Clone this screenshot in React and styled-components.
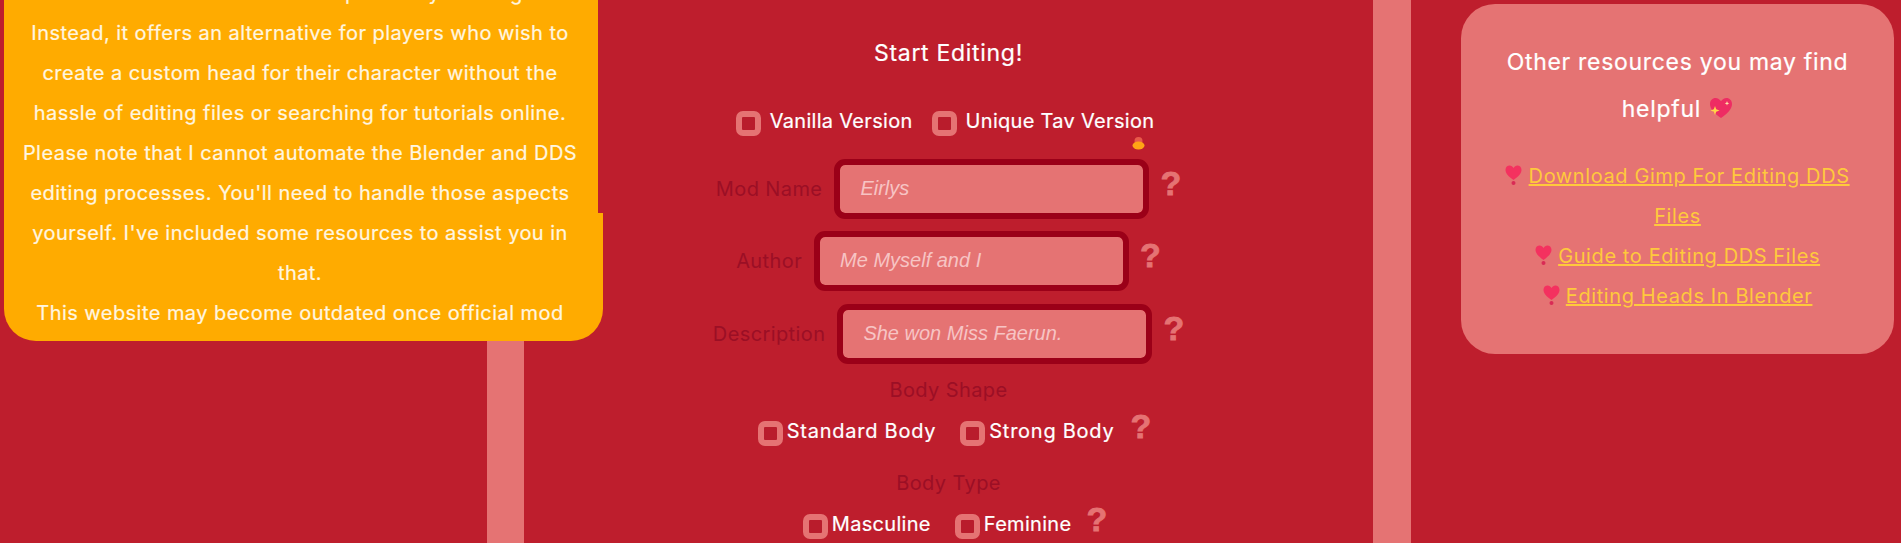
import styled, { createGlobalStyle } from 'styled-components';

const Global = createGlobalStyle`
html, body { margin:0; padding:0; background:#be1e2d; }
body { font-family:"Inter","Liberation Sans",sans-serif; overflow:hidden; }
`;

const Page = styled.div`
position:relative;
display:flex;
align-items:flex-start;
width:1901px;
height:543px;
overflow:hidden;
background:#be1e2d;
`;

const Intro = styled.section`
position:absolute;
left:4px;
bottom:202px;
color:#fff6e0;
font-size:20px;
letter-spacing:.45px;
line-height:40px;
text-align:center;
-webkit-text-stroke:.2px #fff6e0;
`;

const IntroTop = styled.div`
width:594px;
background:#ffab00;
`;

const IntroBottom = styled.div`
width:599px;
padding-bottom:8px;
background:#ffab00;
border-radius:0 0 32px 32px;
`;

const IntroLine = styled.div`
width:592px;
white-space:nowrap;
`;

const Editor = styled.main`
box-sizing:border-box;
flex:none;
width:924px;
height:543px;
margin-left:487px;
border-left:37px solid #e57373;
border-right:38px solid #e57373;
display:flex;
flex-direction:column;
align-items:center;
`;

const Heading = styled.h2`
margin:36px 0 0;
font-size:23px;
letter-spacing:.7px;
line-height:34px;
font-weight:400;
color:#fff;
-webkit-text-stroke:.2px #fff;
`;

const CheckRow = styled.div`
display:flex;
align-items:flex-start;
height:25px;
margin-top:${p => p.$top}px;
margin-left:${p => p.$left || 0}px;
margin-right:${p => p.$nudge || 0}px;
`;

const Option = styled.label`
display:flex;
align-items:flex-start;
gap:${p => p.$gap}px;
margin-right:${p => p.$after}px;
color:#fff;
font-size:20px;
letter-spacing:${p => p.$track}px;
line-height:20px;
-webkit-text-stroke:.2px #fff;
`;

const Box = styled.span`
box-sizing:border-box;
flex:none;
width:25px;
height:25px;
border:6px solid #e57373;
border-radius:7px;
background:#b91c2c;
`;

const Field = styled.div`
display:flex;
align-items:center;
margin-top:${p => p.$top}px;
`;

const FieldLabel = styled.label`
color:#9b0f25;
font-size:20px;
letter-spacing:.4px;
margin-right:12px;
`;

const TextBox = styled.input`
box-sizing:border-box;
width:315px;
height:60px;
padding:0 20px 2px;
border:6px solid #9b0018;
border-radius:11px;
outline:none;
background:#e57373;
background-clip:padding-box;
font-family:"Liberation Sans",sans-serif;
font-size:20px;
font-style:italic;
&::placeholder { color:#f7c4c4; opacity:1; }
`;

const Hint = styled.span`
color:#e57373;
font-family:"Liberation Sans",sans-serif;
font-size:34px;
font-weight:700;
line-height:30px;
-webkit-text-stroke:.8px #e57373;
margin-left:${p => p.$gap}px;
margin-top:${p => p.$up}px;
`;

const SubLabel = styled.div`
color:#9b0f25;
font-size:20px;
letter-spacing:.4px;
line-height:24px;
margin-top:${p => p.$top}px;
`;

const Resources = styled.aside`
box-sizing:border-box;
flex:none;
width:433px;
height:350px;
margin:4px 0 0 50px;
padding:35px 40px 0;
background:#e57373;
border-radius:34px;
text-align:center;
`;

const ResTitle = styled.h3`
margin:0 0 23px;
font-size:23px;
letter-spacing:.7px;
line-height:47px;
font-weight:400;
color:#fff;
-webkit-text-stroke:.2px #fff;
`;

const ResLine = styled.div`
font-size:20px;
letter-spacing:.6px;
line-height:40px;
`;

const ResLink = styled.a`
color:#ffc93c;
text-decoration:underline;
`;

const Emoji = styled.svg`
vertical-align:${p => p.$align};
margin-left:${p => p.$left || 0}px;
`;

const Balloon = () => (
  <Emoji width="17" height="21" viewBox="0 0 17 21" $align="-3px">
    <path d="M8.5 15C3 11 .5 8 .5 4.700.5 2 2.500.5 4.600.5c1.700 0 3 .9 3.900 2.400C9.400 1.400 10.700.5 12.400.5c2.100 0 4.100 1.500 4.100 4.200C16.500 8 14 11 8.500 15z" fill="#f4315f" />
    <circle cx="8.500" cy="18" r="2" fill="#d92b55" />
  </Emoji>
);

const SparkleHeart = () => (
  <Emoji width="24" height="22" viewBox="0 0 24 22" $align="-2px" $left={1}>
    <path d="M12 21C5 16 1 12 1 7 1 3.500 3.500 1 6.500 1 8.800 1 10.800 2.300 12 4.300 13.200 2.300 15.200 1 17.500 1 20.500 1 23 3.500 23 7c0 5-4 9-11 14z" fill="#ee2c63" />
    <path d="M6 9l1.200 3.300L10.500 13.500 7.200 14.700 6 18 4.800 14.700 1.500 13.500 4.800 12.300z" fill="#ffd54a" />
    <path d="M18 4l.6 1.700L20.300 6.300 18.600 6.900 18 8.600 17.400 6.900 15.700 6.300 17.400 5.700z" fill="#ffe9a8" />
  </Emoji>
);

const Blob = styled.svg`
position:absolute;
left:1132px;
top:137px;
`;

const introLines = [
  'This website is not intended to replace any existing tools.',
  'Instead, it offers an alternative for players who wish to',
  'create a custom head for their character without the',
  'hassle of editing files or searching for tutorials online.',
  'Please note that I cannot automate the Blender and DDS',
  "editing processes. You'll need to handle those aspects",
  "yourself. I've included some resources to assist you in",
  'that.',
  'This website may become outdated once official mod',
];

export default function App() {
  return (
    <>
      <Global />
      <Page>
        <Editor>
          <Heading>Start Editing!</Heading>
          <CheckRow $top={41} $nudge={7}>
            <Option $gap={9} $after={19} $track={.3}><Box />Vanilla Version</Option>
            <Option $gap={9} $after={0} $track={.3}><Box />Unique Tav Version</Option>
          </CheckRow>
          <Field $top={23}>
            <FieldLabel>Mod Name</FieldLabel>
            <TextBox placeholder="Eirlys" />
            <Hint $gap={11} $up={-12}>?</Hint>
          </Field>
          <Field $top={12}>
            <FieldLabel>Author</FieldLabel>
            <TextBox placeholder="Me Myself and I" />
            <Hint $gap={11} $up={-12}>?</Hint>
          </Field>
          <Field $top={13}>
            <FieldLabel>Description</FieldLabel>
            <TextBox placeholder="She won Miss Faerun." />
            <Hint $gap={11} $up={-12}>?</Hint>
          </Field>
          <SubLabel $top={14}>Body Shape</SubLabel>
          <CheckRow $top={19} $left={12}>
            <Option $gap={4} $after={24} $track={.75}><Box />Standard Body</Option>
            <Option $gap={4} $after={0} $track={.75}><Box />Strong Body</Option>
            <Hint $gap={16} $up={-10}>?</Hint>
          </CheckRow>
          <SubLabel $top={25}>Body Type</SubLabel>
          <CheckRow $top={19} $left={13}>
            <Option $gap={4} $after={24} $track={.3}><Box />Masculine</Option>
            <Option $gap={4} $after={0} $track={.3}><Box />Feminine</Option>
            <Hint $gap={15} $up={-10}>?</Hint>
          </CheckRow>
        </Editor>
        <Intro>
          <IntroTop>
            {introLines.slice(0, 6).map(l => <IntroLine key={l}>{l}</IntroLine>)}
          </IntroTop>
          <IntroBottom>
            {introLines.slice(6).map(l => <IntroLine key={l}>{l}</IntroLine>)}
          </IntroBottom>
        </Intro>
        <Resources>
          <ResTitle>Other resources you may find helpful <SparkleHeart /></ResTitle>
          <ResLine><Balloon /> <ResLink href="#">Download Gimp For Editing DDS Files</ResLink></ResLine>
          <ResLine><Balloon /> <ResLink href="#">Guide to Editing DDS Files</ResLink></ResLine>
          <ResLine><Balloon /> <ResLink href="#">Editing Heads In Blender</ResLink></ResLine>
        </Resources>
        <Blob width="13" height="13" viewBox="0 0 13 13">
          <circle cx="6.500" cy="4" r="4" fill="#e85a4a" />
          <ellipse cx="6.500" cy="8.500" rx="6" ry="4" fill="#ffa415" />
        </Blob>
      </Page>
    </>
  );
}
